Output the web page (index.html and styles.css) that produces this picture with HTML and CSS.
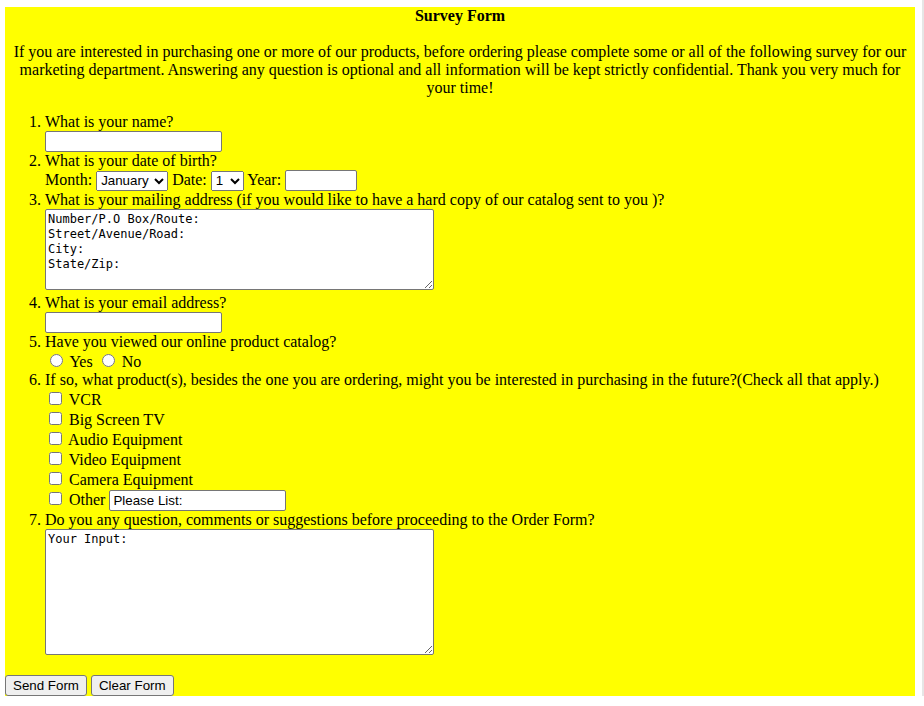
FILE: index.html
```html
<!DOCTYPE html>
<html>
<head>
<meta charset="utf-8">
<title>Survey Form</title>
<link rel="stylesheet" href="styles.css">
</head>
<body>
<form class="page">
  <div class="title"><b>Survey Form</b></div>
  <p class="intro">If you are interested in purchasing one or more of our products, before ordering please complete some or all of the following survey for our marketing department. Answering any question is optional and all information will be kept strictly confidential. Thank you very much for your time!</p>
  <ol class="questions">
    <li>What is your name?<br><input type="text" class="field"></li>
    <li>What is your date of birth?<br>Month: <select class="sel-month"><option>January</option><option>February</option></select> Date: <select class="sel-date"><option>1</option><option>2</option></select> Year: <input type="text" class="field field-year"></li>
    <li>What is your mailing address (if you would like to have a hard copy of our catalog sent to you )?<br><textarea class="area area-address">Number/P.O Box/Route:
Street/Avenue/Road:
City:
State/Zip:</textarea></li>
    <li>What is your email address?<br><input type="text" class="field"></li>
    <li>Have you viewed our online product catalog?<br><input type="radio" name="viewed"> Yes <input type="radio" name="viewed"> No</li>
    <li>If so, what product(s), besides the one you are ordering, might you be interested in purchasing in the future?(Check all that apply.)<br>
      <input type="checkbox"> VCR<br>
      <input type="checkbox"> Big Screen TV<br>
      <input type="checkbox"> Audio Equipment<br>
      <input type="checkbox"> Video Equipment<br>
      <input type="checkbox"> Camera Equipment<br>
      <input type="checkbox"> Other <input type="text" class="field" value="Please List:"></li>
    <li>Do you any question, comments or suggestions before proceeding to the Order Form?<br><textarea class="area area-comments">Your Input:</textarea></li>
  </ol>
  <div class="actions"><button type="submit" class="btn">Send Form</button> <button type="reset" class="btn">Clear Form</button></div>
</form>
</body>
</html>
```
FILE: styles.css
```css
html {
  background: #ffffff;
  border-right: 2px solid #e6e6e6;
}
body {
  margin: 7px 7px 0 5px;
  font-family: "Liberation Serif", "Times New Roman", serif;
  font-size: 16px;
  color: #000000;
}
.page {
  background: #ffff00;
  margin: 0;
}
.title {
  text-align: center;
}
.intro {
  text-align: center;
  margin: 18px 0 16px;
}
.questions {
  margin: 16px 0;
  padding-left: 40px;
}
.field {
  font-family: "Liberation Sans", Arial, sans-serif;
  font-size: 13.333px;
  box-sizing: border-box;
  width: 177px;
  height: 21px;
  padding: 1px 3px;
  border: 1px solid #767676;
  border-radius: 2px;
  background: #ffffff;
  color: #000000;
  margin: 0;
}
.field-year {
  width: 72px;
}
.sel-month,
.sel-date {
  font-family: "Liberation Sans", Arial, sans-serif;
  font-size: 13.333px;
  box-sizing: border-box;
  height: 20px;
  margin: 0;
}
.sel-month {
  width: 72px;
}
.sel-date {
  width: 33px;
}
.area {
  font-family: "DejaVu Sans Mono", monospace;
  font-size: 12px;
  line-height: 15px;
  box-sizing: border-box;
  width: 389px;
  padding: 2px;
  border: 1px solid #767676;
  border-radius: 2px;
  margin: 0;
  color: #000000;
  background: #ffffff;
}
.area-address {
  height: 81px;
}
.area-comments {
  height: 126px;
}
.actions {
  margin: 0;
}
.btn {
  font-family: "Liberation Sans", Arial, sans-serif;
  font-size: 13.333px;
  padding: 2px 7px;
  border: 1px solid #767676;
  border-radius: 3px;
  background: #efefef;
  color: #000000;
  margin: 0;
}
```
